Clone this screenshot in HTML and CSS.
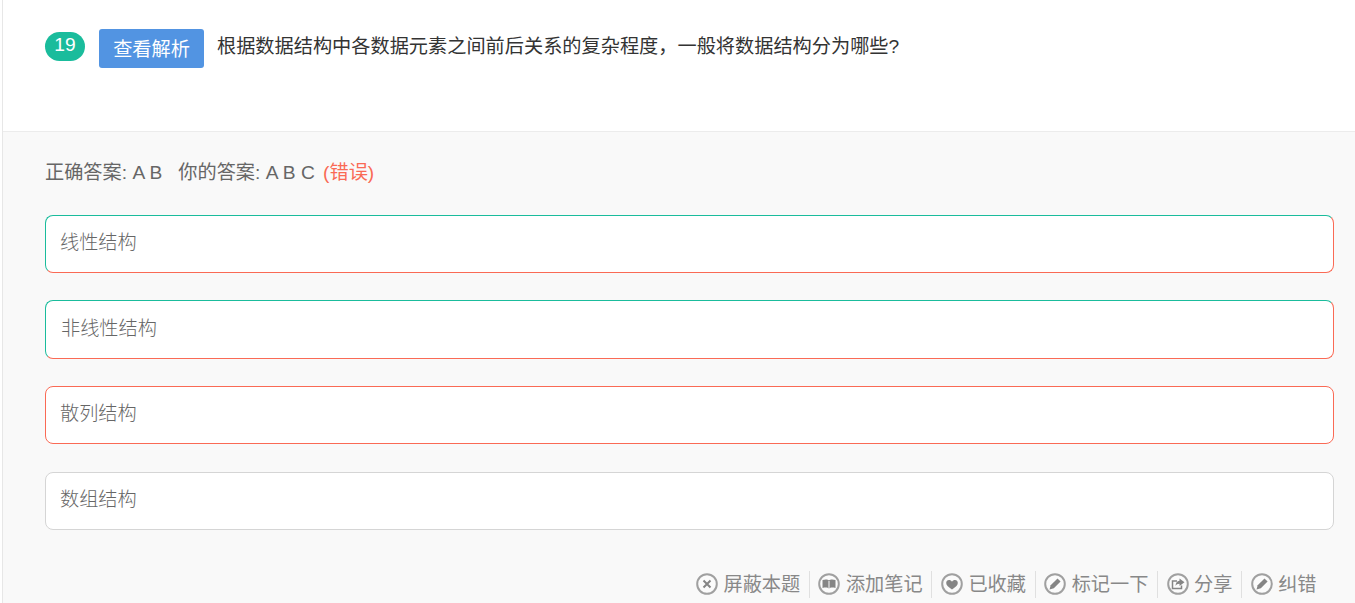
FILE: index.html
```html
<!DOCTYPE html>
<html lang="zh-CN">
<head>
<meta charset="utf-8">
<title>题目 19</title>
<link rel="stylesheet" href="styles.css">
</head>
<body>
<main class="card">
  <header class="question">
    <span class="num">19</span>
    <button class="parse">查看解析</button>
    <p class="stem">根据数据结构中各数据元素之间前后关系的复杂程度&#xFF0C;一般将数据结构分为哪些?</p>
  </header>
  <section class="body">
    <p class="answer">正确答案: A B &nbsp; 你的答案: A B C <span class="wrong">(错误)</span></p>
    <ul class="options">
      <li class="opt both">线性结构</li>
      <li class="opt both alt">非线性结构</li>
      <li class="opt red">散列结构</li>
      <li class="opt">数组结构</li>
    </ul>
    <nav class="actions">
      <a class="act"><svg class="ico" viewBox="0 0 22 22"><circle cx="11" cy="11" r="9.8"/><path class="x" d="M7.500 7.500l7 7M14.500 7.500l-7 7"/></svg>屏蔽本题</a>
      <a class="act"><svg class="ico" viewBox="0 0 22 22"><circle cx="11" cy="11" r="9.800"/><path class="solid" d="M4.500 7c2.800-.9 5.300-.7 6.500.4 1.200-1.100 3.700-1.300 6.500-.4v8c-2.800-.7-5.300-.5-6.500.5-1.200-1-3.700-1.200-6.500-.5z"/><path class="gap" d="M11 8v7"/></svg>添加笔记</a>
      <a class="act"><svg class="ico" viewBox="0 0 22 22"><circle cx="11" cy="11" r="9.800"/><path class="solid" d="M11 16.500c-3.500-2.500-5.800-4.200-5.800-6.600 0-1.600 1.200-2.800 2.800-2.800 1.200 0 2.400.6 3 1.700.6-1.100 1.800-1.700 3-1.700 1.600 0 2.800 1.200 2.800 2.800 0 2.400-2.300 4.100-5.800 6.600z"/></svg>已收藏</a>
      <a class="act"><svg class="ico" viewBox="0 0 22 22"><circle cx="11" cy="11" r="9.800"/><path class="solid" d="M5.500 16.500l1.200-4.300 6.800-6.800 3.100 3.100-6.800 6.800z"/></svg>标记一下</a>
      <a class="act"><svg class="ico" viewBox="0 0 22 22"><circle cx="11" cy="11" r="9.800"/><path class="line" d="M14.500 12.500v3h-9v-7.500h4.500"/><path class="solid" d="M12.500 5.500l5 3.800-5 3.700v-2.200c-2 0-3.200.7-4 2.200 0-3.200 1.600-5 4-5.300z"/></svg>分享</a>
      <a class="act"><svg class="ico" viewBox="0 0 22 22"><circle cx="11" cy="11" r="9.800"/><path class="solid" d="M5.500 16.500l1.200-4.300 6.800-6.800 3.100 3.100-6.800 6.800z"/></svg>纠错</a>
    </nav>
  </section>
</main>
</body>
</html>
```
FILE: styles.css
```css
* { box-sizing: border-box; }
html, body { margin: 0; padding: 0; height: 100%; overflow: hidden; background: #fff; }
body { font: 19.2px/27px "Liberation Sans", "Noto Sans CJK SC", sans-serif; color: #333; }
.card { margin-left: 2px; border-left: 1px solid #e7e7e7; height: 603px; }
.question { height: 132px; padding: 29px 0 0 42px; display: flex; align-items: flex-start; border-bottom: 1px solid #ececec; }
.num { width: 40px; height: 29px; margin-top: 3px; border-radius: 15px; background: #1abc9c; color: #fff; text-align: center; line-height: 26px; }
.parse { width: 105px; height: 39px; margin-left: 14px; padding: 0; border: 0; border-radius: 3px; background: #5294e2; color: #fff; font: inherit; line-height: 41px; }
.stem { margin: 4px 0 0 13px; }
.body { height: 471px; background: #f9f9f9; padding: 27px 21px 0 42px; }
.answer { margin: 0; color: #666; }
.wrong { margin-left: 3px; color: #fa6a55; }
.options { list-style: none; margin: 28.800px 0 0; padding: 0; display: flex; flex-direction: column; gap: 27.470px; }
.opt { height: 58.200px; padding: 13px 14px; background: #fff; border: 1px solid #d5d5d5; border-radius: 8px; color: #666; font-weight: 300; }
.opt.red { border-color: #fa6a55; }
.opt.both { border-color: #1abc9c #fa6a55 #fa6a55 #1abc9c; }
.opt.alt { padding-top: 14px; padding-left: 15px; }
.actions { display: flex; justify-content: flex-end; margin-top: 41px; color: #888; }
.act { display: flex; align-items: center; height: 27px; padding: 0 8.700px 0 8.500px; border-left: 1px solid #e0e0e0; }
.act:first-child { border-left: 0; }
.act:last-child { padding-right: 17.500px; }
.ico { width: 22px; height: 22px; margin-right: 5.500px; flex: none; }
.ico circle { fill: #fbfbfb; stroke: #a0a0a0; stroke-width: 2; }
.ico .solid { fill: #858585; }
.ico .x, .ico .line { fill: none; stroke: #858585; stroke-width: 2; }
.ico .line { stroke-width: 1.500; }
.ico .gap { stroke: #f9f9f9; stroke-width: 1; fill: none; }
```
